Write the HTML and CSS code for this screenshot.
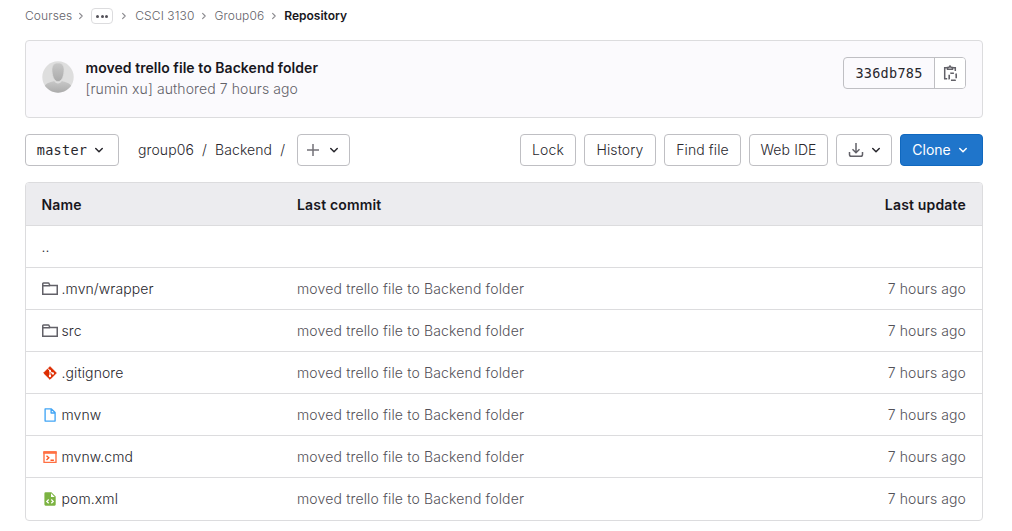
FILE: index.html
```html
<!DOCTYPE html>
<html lang="en">
<head>
<meta charset="utf-8">
<title>Repository</title>
<link rel="stylesheet" href="styles.css">
</head>
<body>
<svg class="sprites" width="0" height="0">
  <symbol id="chevron-down" viewBox="0 0 16 16"><path d="M4.75 6.5 8 9.7l3.25-3.2" fill="none" stroke="currentColor" stroke-width="1.5" stroke-linecap="round" stroke-linejoin="round"/></symbol>
  <symbol id="chevron-right" viewBox="0 0 8 8"><path d="M2.6 1.4 5.2 4 2.6 6.6" fill="none" stroke="currentColor" stroke-width="1.1" stroke-linecap="round" stroke-linejoin="round"/></symbol>
  <symbol id="folder" viewBox="0 0 16 16"><path d="M.75 13.300V2.700q0-.7.7-.7h4.800q.6 0 .8.600l.8 2h7.400v8.700zM.75 4.700h7.300" fill="none" stroke="currentColor" stroke-width="1.5"/></symbol>
</svg>
<main class="page">
  <nav class="breadcrumbs">
    <a>Courses</a>
    <svg class="sep"><use href="#chevron-right"/></svg>
    <button class="more"><i></i><i></i><i></i></button>
    <svg class="sep wide"><use href="#chevron-right"/></svg>
    <a>CSCI 3130</a>
    <svg class="sep"><use href="#chevron-right"/></svg>
    <a>Group06</a>
    <svg class="sep"><use href="#chevron-right"/></svg>
    <strong>Repository</strong>
  </nav>

  <section class="commit">
    <svg class="avatar" viewBox="0 0 32 32">
      <defs>
        <clipPath id="round"><circle cx="16" cy="16" r="15.7"/></clipPath>
        <linearGradient id="shade" x1="0" y1="0" x2="0" y2="1"><stop offset="0" stop-color="#c8c8c8"/><stop offset="1" stop-color="#aaa"/></linearGradient>
      </defs>
      <g clip-path="url(#round)">
        <rect width="32" height="32" fill="#dedede"/>
        <path d="M3 32v-7.500c1-2.500 6-3.300 9.200-4.500 1.400 3.200 6.200 3.200 7.600 0C23 21.200 28 22 29 24.500V32z" fill="url(#shade)"/>
        <path d="M16 2c4 0 6 2.500 6 6.500 0 5-1.500 12-6 12S10 13.500 10 8.500C10 4.500 12 2 16 2z" fill="url(#shade)" stroke="#dedede" stroke-width=".6"/>
      </g>
    </svg>
    <div class="commit-text">
      <div class="commit-title">moved trello file to Backend folder</div>
      <div class="commit-meta">[rumin xu] authored 7 hours ago</div>
    </div>
    <div class="sha-group">
      <span class="sha">336db785</span>
      <button class="copy" aria-label="Copy"><svg viewBox="0 0 16 16" fill="none" stroke="currentColor" stroke-width="1.5"><path d="M5.200 13.800H2.700V2.800H5M11 2.800h2.300V6M5.500 4.300V2.400L7 2.200 8 1l1 1.200 1.500.2v1.900z"/><rect x="7.200" y="8.300" width="7" height="7" rx="1.500" stroke-width="1.600" stroke-dasharray="4.700 1.700" stroke-dashoffset="1.500"/></svg></button>
    </div>
  </section>

  <div class="toolbar">
    <button class="btn branch"><span>master</span><svg><use href="#chevron-down"/></svg></button>
    <div class="path"><a>group06</a><span>/</span><a>Backend</a><span>/</span></div>
    <button class="btn add" aria-label="Add"><svg viewBox="0 0 16 16"><path d="M8 2v12M2 8h12" stroke="#737278" stroke-width="1.500"/></svg><svg><use href="#chevron-down"/></svg></button>
    <div class="actions">
      <button class="btn lock">Lock</button>
      <button class="btn history">History</button>
      <button class="btn find">Find file</button>
      <button class="btn ide">Web IDE</button>
      <button class="btn download" aria-label="Download"><svg viewBox="0 0 16 16"><path d="M8 1v9.500M4.500 7.300 8 10.700l3.500-3.400M1.500 10v2.500q0 1.800 1.800 1.800h9.400q1.800 0 1.800-1.800V10" fill="none" stroke="#626168" stroke-width="1.500"/></svg><svg><use href="#chevron-down"/></svg></button>
      <button class="btn clone"><span>Clone</span><svg><use href="#chevron-down"/></svg></button>
    </div>
  </div>

  <div class="files">
    <div class="row head"><span>Name</span><span>Last commit</span><span class="when">Last update</span></div>
    <div class="row"><span class="name">..</span></div>
    <div class="row"><span class="name"><svg class="folder"><use href="#folder"/></svg><b>.mvn/wrapper</b></span><span class="msg">moved trello file to Backend folder</span><span class="when">7 hours ago</span></div>
    <div class="row"><span class="name"><svg class="folder"><use href="#folder"/></svg><b>src</b></span><span class="msg">moved trello file to Backend folder</span><span class="when">7 hours ago</span></div>
    <div class="row"><span class="name"><svg viewBox="0 0 16 16"><path d="M8 1.700 14.300 8 8 14.300 1.700 8z" fill="#dd2c00" stroke="#dd2c00" stroke-linejoin="round"/><path d="M5.500 3.300 8 5.600v5.500M8 6l2.700 2.400" fill="none" stroke="#fff" stroke-width="1"/><circle cx="8" cy="5.800" r="1" fill="#fff"/><circle cx="8" cy="11" r="1.200" fill="#fff"/><circle cx="10.800" cy="8.400" r="1.200" fill="#fff"/></svg><b>.gitignore</b></span><span class="msg">moved trello file to Backend folder</span><span class="when">7 hours ago</span></div>
    <div class="row"><span class="name"><svg viewBox="0 0 16 16"><path d="M3.100 1.900h6.300l3.700 3.700v8.500h-10zM9.100 2v4h4" fill="none" stroke="#42a5f5" stroke-width="1.350" stroke-linejoin="round"/></svg><b>mvnw</b></span><span class="msg">moved trello file to Backend folder</span><span class="when">7 hours ago</span></div>
    <div class="row"><span class="name"><svg viewBox="0 0 16 16"><path d="M2 3h12v10.400H2z" fill="none" stroke="#ff7043" stroke-width="1.400" stroke-linejoin="round"/><path d="M1.300 2.300h13.400v2.500H1.300z" fill="#ff7043"/><path d="m4.500 6.700 2.300 2.100-2.300 2.100M8.500 11.200h3.400" fill="none" stroke="#ff5722" stroke-width="1.350"/></svg><b>mvnw.cmd</b></span><span class="msg">moved trello file to Backend folder</span><span class="when">7 hours ago</span></div>
    <div class="row"><span class="name"><svg viewBox="0 0 16 16"><path d="M3.600 1.300h5.800l4.300 4.200v8.100q0 1.100-1.100 1.100h-9q-1.200 0-1.200-1.100V2.400q0-1.100 1.200-1.100z" fill="#7cb342"/><path d="M9 2.300v3.600h3.700z" fill="#fff"/><path d="M6.700 8.500 4.800 10.400l1.900 1.900M9.300 8.500l1.900 1.900-1.900 1.900" fill="none" stroke="#fff" stroke-width="1.300"/></svg><b>pom.xml</b></span><span class="msg">moved trello file to Backend folder</span><span class="when">7 hours ago</span></div>
  </div>
</main>
</body>
</html>
```
FILE: styles.css
```css
* { box-sizing: border-box; }
body { margin: 0; background: #fff; color: #28272d; font: 350 14px/20px Inter, "Liberation Sans", sans-serif; letter-spacing: .1px; overflow: hidden; }
button { font: inherit; letter-spacing: inherit; color: inherit; margin: 0; padding: 0; background: #fff; }
svg { display: block; flex: none; width: 16px; height: 16px; }
.sprites { position: absolute; width: 0; height: 0; }
.page { width: 958px; margin-left: 25px; white-space: nowrap; }

.breadcrumbs { display: flex; align-items: center; height: 32px; font-size: 12px; color: #626168; }
.breadcrumbs .sep { width: 8px; height: 8px; margin: 0 6px; color: #89888d; }
.breadcrumbs .sep:first-of-type { margin: 0 6px 0 5px; }
.breadcrumbs .wide { margin-left: 7px; margin-right: 7px; }
.breadcrumbs strong { color: #18171d; font-weight: 600; letter-spacing: 0; }
.more { display: flex; align-items: center; justify-content: center; gap: 1.5px; width: 22px; height: 16px; border: 1px solid #dcdcde; border-radius: 4px; }
.more i { width: 3px; height: 3px; border-radius: 50%; background: #535158; }

.commit { display: flex; height: 78px; margin-top: 8px; padding: 16px; border: 1px solid #dcdcde; border-radius: 4px; background: #fbfafd; }
.avatar { width: 32px; height: 32px; margin-top: 4px; }
.commit-text { margin-left: 11.5px; line-height: 21px; }
.commit-title { color: #18171d; font-weight: 600; letter-spacing: .05px; }
.commit-meta { color: #626168; }
.sha-group { display: flex; margin-left: auto; height: 32px; border: 1px solid #bfbfc3; border-radius: 4px; overflow: hidden; }
.sha { width: 90px; text-align: center; line-height: 30px; color: #28272d; }
.sha, .branch span { font-family: "DejaVu Sans Mono", "Liberation Mono", monospace; font-size: 13.5px; letter-spacing: .27px; }
.copy { display: flex; align-items: center; justify-content: center; width: 31px; border: 0; border-left: 1px solid #bfbfc3; color: #626168; }

.toolbar { display: flex; align-items: center; height: 32px; margin: 16px 0; }
.btn { display: flex; align-items: center; justify-content: center; height: 32px; border: 1px solid #bfbfc3; border-radius: 4px; }
.branch { width: 94px; gap: 4px; }
.path { display: flex; width: 159px; margin-left: 19px; gap: 8px; }
.add { width: 53px; gap: 5px; }
.actions { display: flex; gap: 8px; margin-left: auto; }
.lock { width: 56px; }
.history { width: 72px; }
.find { width: 77px; }
.ide { width: 79px; }
.download { width: 56px; gap: 4px; padding-left: 4px; }
.clone { width: 83px; gap: 4px; background: #1f75cb; border-color: #1068bf; color: #fff; font-weight: 400; letter-spacing: 0; }

.files { border: 1px solid #dcdcde; border-radius: 4px; overflow: hidden; }
.row { display: grid; grid-template-columns: 255.5px 1fr auto; align-items: center; height: 42px; padding: 0 16px 0 15.5px; border-bottom: 1px solid #dcdcde; }
.row:last-child { border-bottom: 0; }
.head { height: 43px; padding-top: 2px; background: #ececef; color: #18171d; font-weight: 600; letter-spacing: .17px; }
.name { display: flex; align-items: center; gap: 4px; }
.name b { font-weight: inherit; }
.folder { color: #626168; }
.msg, .when { color: #535158; }
.msg { letter-spacing: .15px; }
.head .when { color: inherit; }
```
